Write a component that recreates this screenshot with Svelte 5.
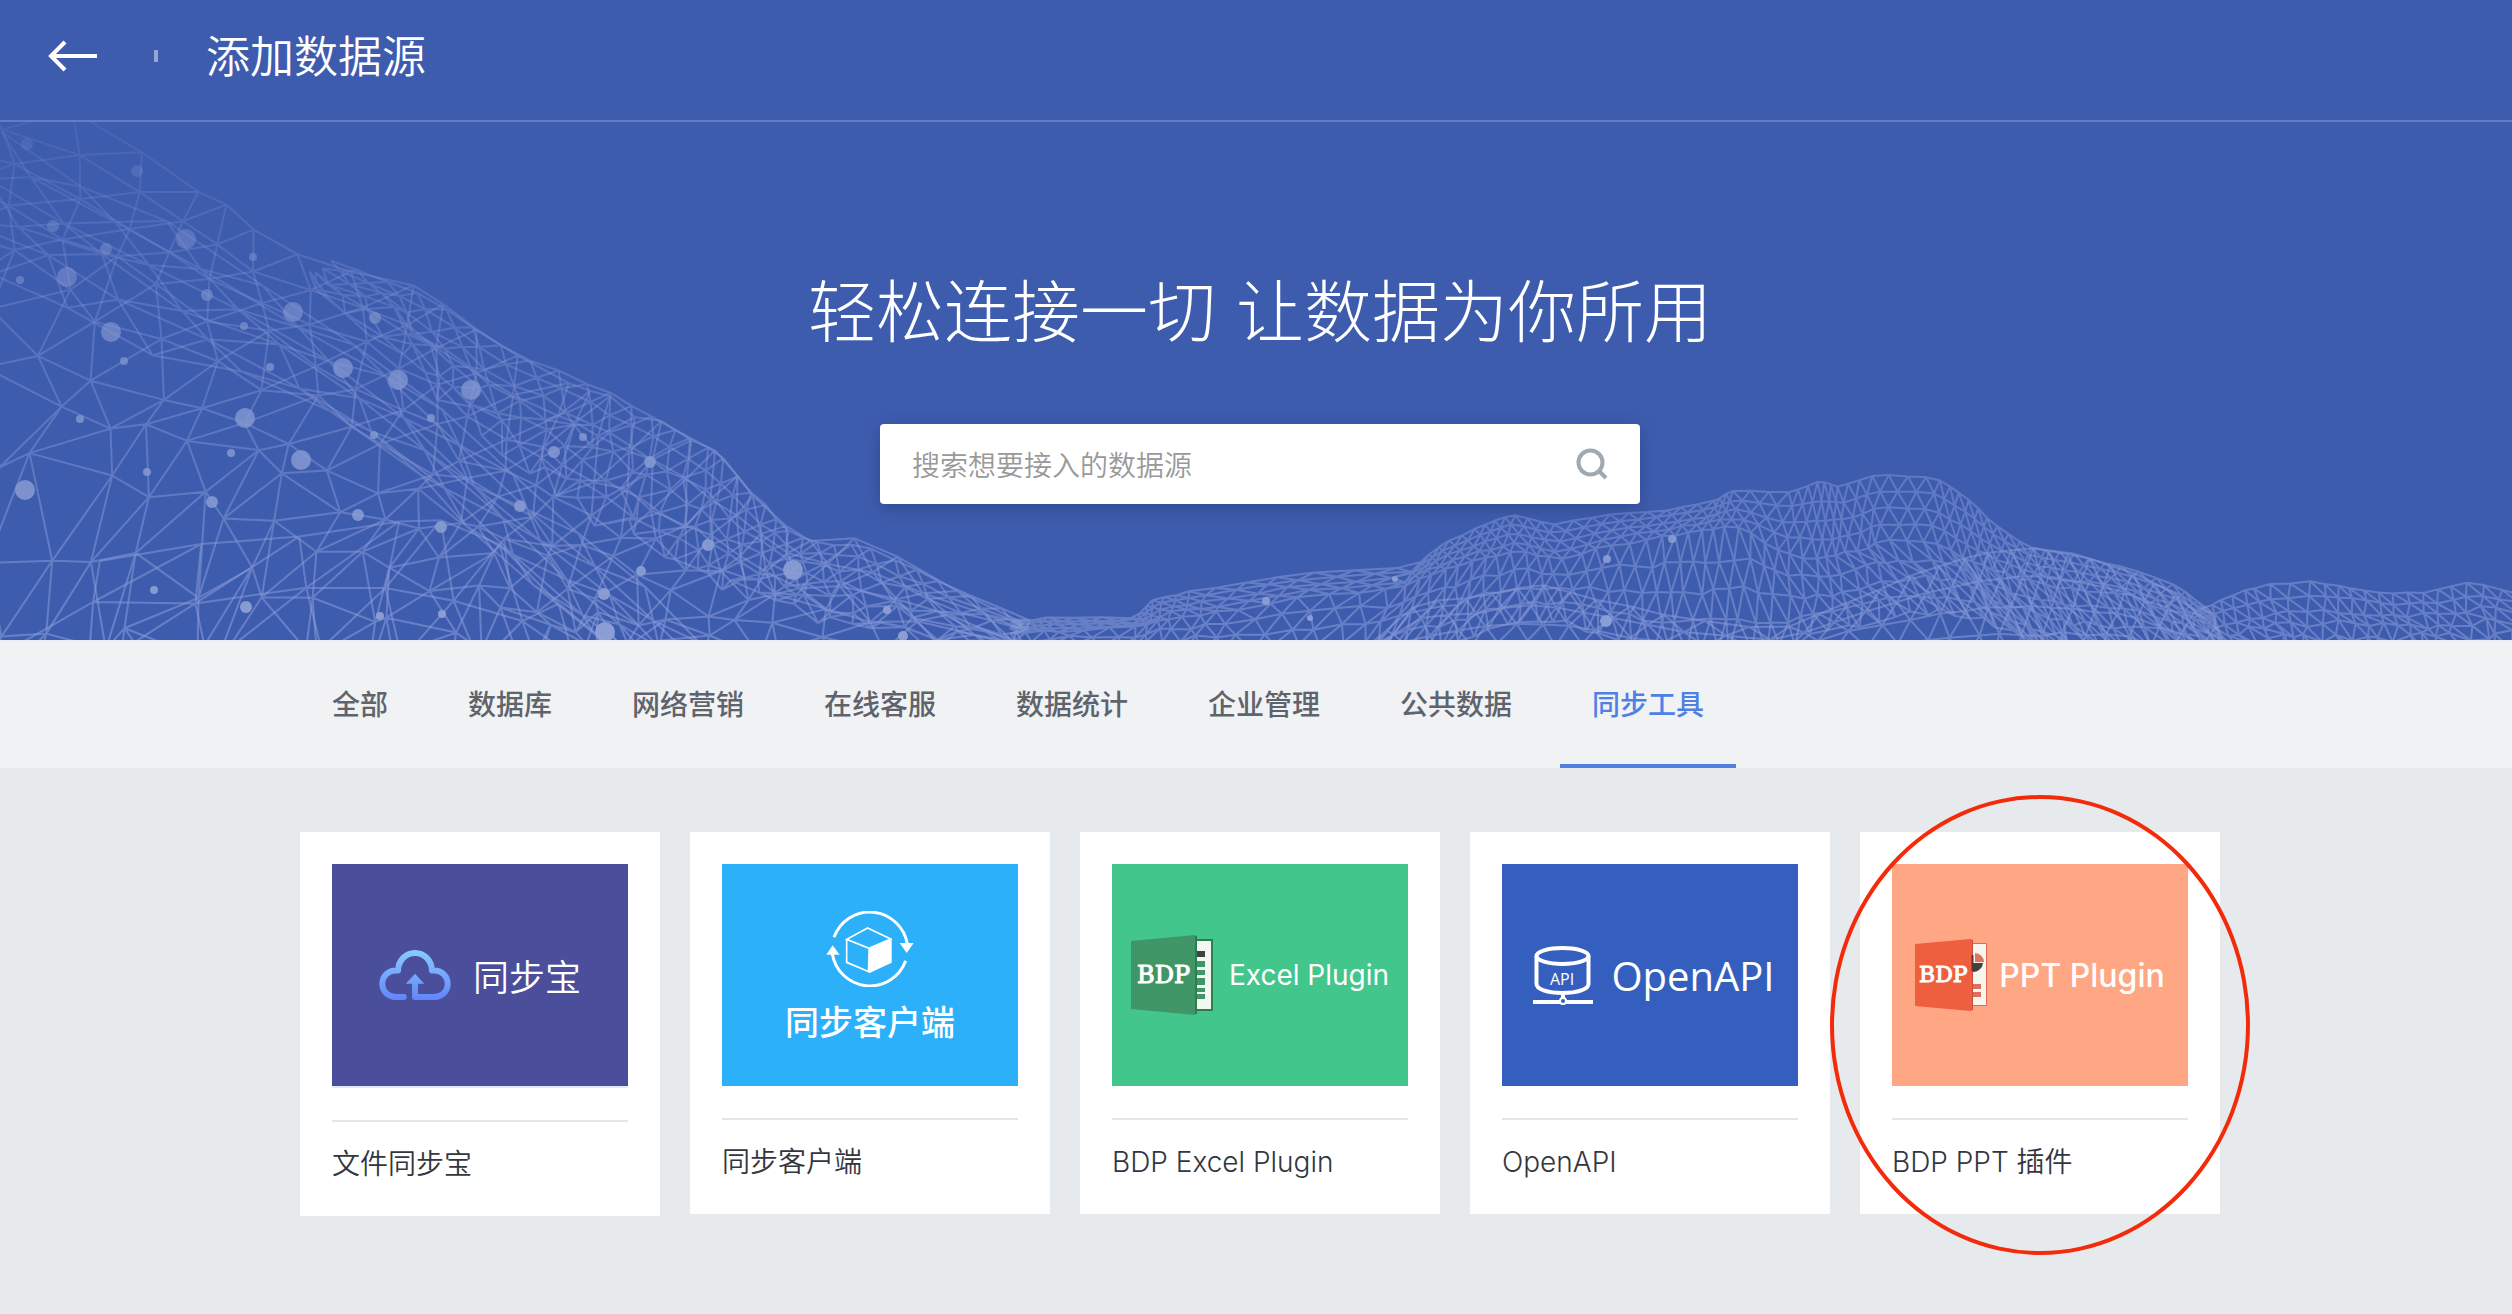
<script>
    let keyword = "";
    let activeTab = "同步工具";

    const tabs = ["全部", "数据库", "网络营销", "在线客服", "数据统计", "企业管理", "公共数据", "同步工具"];

    const sources = [
        { id: "file", name: "文件同步宝" },
        { id: "client", name: "同步客户端" },
        { id: "excel", name: "BDP Excel Plugin" },
        { id: "api", name: "OpenAPI" },
        { id: "ppt", name: "BDP PPT 插件", marked: true }
    ];

    // repeatable noise, so the mesh is the same on every load
    function noise(a, b) {
        const v = Math.sin(a * 127.1 + b * 311.7) * 43758.5453;
        return v - Math.floor(v) - 0.5;
    }

    // point at share s of a polyline, by index
    function along(line, s) {
        const f = Math.min(Math.max(s, 0), 1) * (line.length - 1);
        const i = Math.min(Math.floor(f), line.length - 2);
        const k = f - i;
        return [
            line[i][0] + (line[i + 1][0] - line[i][0]) * k,
            line[i][1] + (line[i + 1][1] - line[i][1]) * k
        ];
    }

    // triangulated sheet stretched over a list of ridge lines
    function sheet(ridges, cols, rows, jitter, seed) {
        const points = [];
        for (let r = 0; r <= rows; r++) {
            const f = (r / rows) * (ridges.length - 1);
            const k = Math.min(Math.floor(f), ridges.length - 2);
            const row = [];
            for (let c = 0; c <= cols; c++) {
                const s = (c + (r % 2) * 0.5) / cols;
                const a = along(ridges[k], s);
                const b = along(ridges[k + 1], s);
                const t = f - k;
                const scale = r === 0 ? 0.2 : r / rows;
                row.push([
                    a[0] + (b[0] - a[0]) * t + noise(c + seed, r) * jitter * scale,
                    a[1] + (b[1] - a[1]) * t + noise(r, c + seed) * jitter * scale
                ]);
            }
            points.push(row);
        }
        let d = "";
        const line = (p, q) => {
            d += `M${p[0].toFixed(1)} ${p[1].toFixed(1)}L${q[0].toFixed(1)} ${q[1].toFixed(1)}`;
        };
        for (let r = 0; r <= rows; r++) {
            for (let c = 0; c <= cols; c++) {
                if (c < cols) line(points[r][c], points[r][c + 1]);
                if (r < rows) {
                    line(points[r][c], points[r + 1][c]);
                    const side = r % 2 ? c + 1 : c - 1;
                    if (side >= 0 && side <= cols) line(points[r][c], points[r + 1][side]);
                }
            }
        }
        return d;
    }

    const slope = sheet([
        [[-20, -30], [100, 2], [190, 60], [231, 88], [271, 125], [348, 152], [422, 170], [462, 198], [512, 230], [579, 267], [603, 267], [633, 292], [670, 304], [713, 329], [743, 357], [767, 387], [807, 421], [864, 421], [934, 456], [1024, 498]],
        [[-80, 60], [0, 90], [70, 130], [130, 160], [200, 200], [280, 230], [340, 260], [390, 300], [440, 330], [490, 355], [530, 380], [570, 400], [610, 420], [650, 440], [700, 460], [740, 480], [790, 490], [850, 500], [920, 510], [1010, 530]],
        [[-200, 220], [-110, 250], [-40, 280], [30, 310], [100, 335], [170, 355], [230, 370], [290, 385], [350, 400], [400, 420], [450, 450], [500, 475], [540, 500], [580, 520], [630, 540], [680, 550], [730, 560], [800, 570], [880, 575], [980, 580]],
        [[-300, 560], [-200, 570], [-120, 580], [-40, 590], [30, 600], [100, 600], [160, 600], [220, 600], [280, 600], [340, 600], [400, 600], [460, 610], [520, 610], [580, 610], [640, 610], [700, 610], [760, 610], [820, 610], [880, 610], [960, 610]]
    ], 26, 10, 60, 3);

    // stretched folds that run down the middle of the slope
    const folds = sheet([
        [[0, 10], [90, 70], [190, 110], [300, 190], [400, 250], [490, 330], [560, 400], [640, 460], [700, 520]],
        [[-20, 70], [70, 110], [160, 160], [270, 215], [360, 265], [440, 340], [520, 410], [590, 470], [650, 530]],
        [[-40, 130], [50, 170], [130, 215], [240, 250], [330, 290], [420, 350], [490, 420], [560, 485], [620, 540]]
    ], 9, 5, 24, 19);

    const slopeRidge = sheet([
        [[330, 140], [422, 172], [512, 230], [603, 268], [670, 304], [725, 338], [767, 388], [807, 422], [864, 421], [934, 456], [1030, 500]],
        [[300, 160], [400, 230], [470, 300], [540, 350], [600, 395], [660, 430], [710, 455], [760, 480], [830, 500], [900, 515], [1010, 530]]
    ], 32, 6, 22, 11);

    const foothill = sheet([
        [[100, 438], [200, 424], [300, 414], [400, 398], [440, 400], [500, 424], [560, 480], [610, 520]],
        [[0, 530], [90, 545], [200, 540], [320, 530], [400, 540], [480, 550], [540, 560], [600, 580]]
    ], 7, 2, 20, 29);

    const hills = sheet([
        [[1010, 500], [1048, 496], [1135, 496], [1154, 477], [1193, 469], [1289, 453], [1415, 444], [1444, 421], [1482, 404], [1511, 392], [1550, 403], [1607, 393], [1665, 388], [1714, 379], [1733, 369], [1791, 370], [1820, 359], [1839, 365], [1877, 352], [1935, 355], [1964, 373], [1993, 401], [2027, 425], [2070, 431], [2119, 444], [2172, 461], [2210, 488]],
        [[1010, 512], [1060, 508], [1140, 506], [1170, 496], [1220, 490], [1310, 474], [1400, 466], [1440, 450], [1480, 438], [1520, 430], [1560, 438], [1610, 424], [1660, 414], [1700, 410], [1740, 404], [1780, 430], [1820, 438], [1850, 430], [1880, 420], [1930, 418], [1970, 440], [2000, 450], [2040, 462], [2080, 468], [2130, 474], [2180, 492], [2220, 508]],
        [[990, 540], [1050, 540], [1110, 540], [1160, 540], [1220, 540], [1290, 540], [1350, 540], [1400, 530], [1450, 520], [1500, 500], [1550, 495], [1600, 510], [1650, 530], [1700, 530], [1750, 530], [1800, 520], [1850, 505], [1900, 490], [1950, 490], [1990, 500], [2030, 520], [2060, 530], [2100, 540], [2140, 540], [2190, 540], [2220, 540], [2240, 540]]
    ], 80, 8, 8, 47);

    const frontHill = sheet([
        [[1360, 530], [1420, 480], [1480, 474], [1540, 462], [1600, 478], [1680, 496], [1780, 508], [1850, 480], [1920, 450], [1980, 432], [2030, 425], [2070, 432], [2120, 446], [2170, 468], [2215, 505]],
        [[1340, 570], [1400, 550], [1470, 540], [1540, 540], [1600, 540], [1680, 550], [1780, 550], [1850, 540], [1920, 540], [1980, 540], [2030, 540], [2080, 540], [2130, 540], [2180, 550], [2240, 560]]
    ], 32, 4, 8, 61);

    const farHill = sheet([
        [[2200, 486], [2230, 474], [2260, 464], [2316, 460], [2350, 465], [2390, 472], [2430, 470], [2470, 459], [2520, 471]],
        [[2240, 530], [2270, 530], [2310, 530], [2350, 530], [2390, 530], [2430, 525], [2470, 525], [2510, 525], [2550, 530]]
    ], 22, 5, 14, 83);

    const dots = [
        [186, 117, 10], [67, 155, 10], [111, 210, 10], [293, 190, 10], [343, 246, 10], [398, 258, 10], [471, 268, 10],
        [245, 296, 10], [301, 338, 10], [25, 368, 10], [793, 448, 10], [605, 510, 10],
        [554, 330, 6], [650, 340, 6], [708, 423, 6], [520, 384, 6], [441, 405, 6], [358, 393, 6], [246, 485, 6],
        [212, 380, 6], [604, 472, 6], [106, 127, 6], [375, 196, 6], [207, 173, 6], [53, 104, 6], [27, 22, 6], [137, 49, 6],
        [80, 297, 4], [231, 331, 4], [147, 350, 4], [374, 313, 4], [431, 296, 4], [270, 245, 4], [124, 239, 4],
        [154, 468, 4], [380, 494, 4], [442, 492, 4], [583, 315, 4], [641, 449, 5], [20, 158, 4], [244, 204, 4],
        [253, 135, 4], [887, 488, 4], [903, 514, 5],
        [1266, 479, 4], [1606, 499, 6], [1607, 437, 4], [1672, 417, 4], [1310, 496, 3], [1395, 457, 3]
    ];
</script>

<div class="page">
    <header class="topbar">
        <button class="back" aria-label="返回">
            <svg width="50" height="32" viewBox="0 0 50 32" fill="none" stroke="#fff" stroke-width="4">
                <path d="M49 16H4M17 2L3 16L17 30" />
            </svg>
        </button>
        <span class="separator"></span>
        <h2>添加数据源</h2>
    </header>

    <section class="hero">
        <svg class="mesh" viewBox="0 0 2512 518" preserveAspectRatio="xMinYMax slice" aria-hidden="true">
            <defs>
                <linearGradient id="fade" gradientUnits="userSpaceOnUse" x1="0" y1="0" x2="0" y2="518">
                    <stop offset="0" stop-color="#8c9edb" stop-opacity="0.12" />
                    <stop offset="0.4" stop-color="#8c9edb" stop-opacity="0.32" />
                    <stop offset="1" stop-color="#8c9edb" stop-opacity="0.54" />
                </linearGradient>
                <linearGradient id="dot-fade" gradientUnits="userSpaceOnUse" x1="0" y1="0" x2="0" y2="518">
                    <stop offset="0" stop-color="#8598d2" stop-opacity="0.15" />
                    <stop offset="0.5" stop-color="#8598d2" stop-opacity="0.75" />
                    <stop offset="1" stop-color="#8fa1d6" stop-opacity="0.95" />
                </linearGradient>
            </defs>
            <g fill="none" stroke="url(#fade)" stroke-width="2">
                <path d={slope} />
                <path d={folds} />
                <path d={slopeRidge} />
                <path d={foothill} />
                <path d={hills} />
                <path d={frontHill} />
                <path d={farHill} />
            </g>
            <g fill="url(#dot-fade)">
                {#each dots as [x, y, r]}
                    <circle cx={x} cy={y} {r} />
                {/each}
            </g>
        </svg>

        <h1><span>轻松连接一切</span><span>让数据为你所用</span></h1>
        <form class="search" on:submit|preventDefault>
            <input type="text" placeholder="搜索想要接入的数据源" aria-label="搜索想要接入的数据源" bind:value={keyword}>
            <button aria-label="搜索">
                <svg width="32" height="32" viewBox="0 0 32 32" fill="none" stroke="#a1a9b0" stroke-width="4">
                    <circle cx="14.5" cy="14.5" r="12" />
                    <path d="M23 23L30 30" />
                </svg>
            </button>
        </form>
    </section>

    <nav class="tabs">
        <div class="container">
            {#each tabs as tab}
                <button class:active={tab === activeTab} on:click={() => activeTab = tab}>{tab}</button>
            {/each}
        </div>
    </nav>

    <main class="container cards">
        {#each sources as source}
            <a class="card" href="#{source.id}">
                <div class="thumb {source.id}">
                    {#if source.id === "file"}
                        <svg width="72" height="50" viewBox="261 395 216 151" fill="none">
                            <defs>
                                <linearGradient id="cloud" gradientUnits="userSpaceOnUse" x1="0" y1="395" x2="0" y2="546">
                                    <stop offset="0" stop-color="#8bcbfd" />
                                    <stop offset="1" stop-color="#6085fb" />
                                </linearGradient>
                            </defs>
                            <path d="M335 537H310A40 40 0 0 1 310 457H318C318 428 340 404 369 404S420 428 420 457H428A40 40 0 0 1 428 537H369V492" stroke="url(#cloud)" stroke-width="18" stroke-linejoin="round" />
                            <circle cx="335" cy="537" r="9" fill="url(#cloud)" />
                            <path d="M369 467L397 497H341Z" fill="url(#cloud)" />
                        </svg>
                        <span>同步宝</span>
                    {:else if source.id === "client"}
                        <svg width="88" height="76" viewBox="439 264 264 228" fill="none" stroke="#fff">
                            <path d="M463 343A114 114 0 0 1 683 364M458 392A114 114 0 0 0 678 413" stroke-width="9" />
                            <path d="M660 360H702L681 390ZM440 395H480L459 367Z" fill="#fff" stroke="none" />
                            <path d="M564 315L633 348L568 376L501 349ZM501 349V418L568 446" stroke-width="5" />
                            <path d="M566 375L636 347V419L570 450L564 447Z" fill="#fff" stroke="none" />
                        </svg>
                        <span>同步客户端</span>
                    {:else if source.id === "excel"}
                        <svg width="82" height="80" viewBox="0 0 82 80">
                            <path d="M60 5H81V75H60Z" fill="#f3f7f2" stroke="#2c7d50" stroke-width="2" />
                            <path d="M65 16H74V22H65Z" fill="#41423f" />
                            <path d="M65 26H74V32H65ZM65 35H74V40H65ZM65 43H74V50H65ZM65 53H74V57H65ZM65 59H74V64H65Z" fill="#419667" />
                            <path d="M0 6L64 0L66 2V78L64 80L0 74Z" fill="#419667" />
                            <path d="M65 1V79" stroke="#2c7d50" stroke-width="2" />
                            <text x="6" y="48" font-size="24">BDP</text>
                        </svg>
                        <span>Excel Plugin</span>
                    {:else if source.id === "api"}
                        <svg width="60" height="59" viewBox="0 0 60 59" fill="none" stroke="#fff" stroke-width="4">
                            <ellipse cx="29.5" cy="10" rx="26" ry="8" />
                            <path d="M3.500 10V38C3.500 43 14 47 29.500 47S55.500 43 55.500 38V10M30 47V52M0 56H27M33 56H60" />
                            <circle cx="30" cy="55" r="3" stroke-width="2" />
                            <text class="api-text" x="29" y="39" font-size="16" text-anchor="middle">API</text>
                        </svg>
                        <span>OpenAPI</span>
                    {:else}
                        <svg width="72" height="72" viewBox="0 0 72 72">
                            <path d="M56 4.500H71.500V66.500H56Z" fill="#f8f5ef" stroke="#e0684f" />
                            <path d="M57 24H68A10 10 0 0 1 57 33Z" fill="#41423f" />
                            <path d="M60 14A9 9 0 0 1 69 23H60Z" fill="#dc7562" />
                            <path d="M57 45H66V50H57ZM57 53H66V58H57Z" fill="#dc6f5a" />
                            <path d="M0 5L56 0L58 1V71L56 72L0 67Z" fill="#ee5f40" />
                            <path d="M57.500 1V71" stroke="#c54d3a" />
                            <path d="M57.500 16V32" stroke="#6a3030" stroke-width="2" />
                            <text x="4" y="43" font-size="22">BDP</text>
                        </svg>
                        <span>PPT Plugin</span>
                    {/if}
                </div>
                <div class="name">{source.name}</div>
                {#if source.marked}
                    <span class="marker"></span>
                {/if}
            </a>
        {/each}
    </main>
</div>

<style>
    :global(body) {
        margin: 0;
        background: #e6eaed;
    }

    .page {
        min-height: 100vh;
        font-family: Inter, "Noto Sans CJK SC", sans-serif;
        color: #33363f;
    }

    button, input {
        font: inherit;
        border: none;
        outline: none;
        padding: 0;
        background: none;
    }

    button {
        cursor: pointer;
    }

    svg {
        display: block;
        flex: none;
    }

    h1, h2 {
        margin: 0;
        color: #fff;
        font-family: "Noto Sans CJK SC", sans-serif;
    }

    .topbar {
        display: flex;
        align-items: center;
        height: 120px;
        padding: 0 48px;
        background: #3e5cae;
        border-bottom: 2px solid #647ac4;
    }

    .topbar > * {
        margin-bottom: 8px;
    }

    .separator {
        width: 4px;
        height: 12px;
        margin-left: 56px;
        margin-right: 48px;
        background: #94a4d3;
    }

    h2 {
        font-size: 44px;
        line-height: 56px;
        padding-bottom: 4px;
        font-weight: 350;
    }

    .hero {
        position: relative;
        display: flex;
        flex-direction: column;
        align-items: center;
        height: 518px;
        padding-left: 8px;
        box-sizing: border-box;
        overflow: hidden;
        background: #3e5cae;
    }

    .mesh {
        position: absolute;
        left: 0;
        top: 0;
        width: 100%;
        height: 100%;
    }

    h1 {
        position: relative;
        display: flex;
        gap: 20px;
        margin-top: 136px;
        font-size: 68px;
        line-height: 100px;
        font-weight: 300;
    }

    .search {
        position: relative;
        display: flex;
        align-items: center;
        width: 760px;
        height: 80px;
        margin-top: 66px;
        padding: 0 32px;
        box-sizing: border-box;
        border-radius: 4px;
        background: #fff;
        box-shadow: 0 4px 16px rgba(30, 45, 100, 0.4);
    }

    .search input {
        flex: 1;
        height: 80px;
        font-family: "Noto Sans CJK SC", sans-serif;
        font-size: 28px;
        font-weight: 350;
        color: #33363f;
    }

    .search input::placeholder {
        color: #999;
        opacity: 1;
    }

    .container {
        max-width: 1920px;
        margin: 0 auto;
    }

    .tabs {
        height: 128px;
        padding-left: 8px;
        box-sizing: border-box;
        background: #f0f2f4;
        border-top: 2px solid #e8f0fb;
    }

    .tabs .container {
        display: flex;
        gap: 16px;
    }

    .tabs button {
        height: 126px;
        padding: 0 32px;
        box-sizing: border-box;
        border-bottom: 4px solid transparent;
        font-family: "Noto Sans CJK SC", sans-serif;
        font-size: 28px;
        font-weight: 500;
        color: #5e636c;
        white-space: nowrap;
    }

    .tabs button.active {
        color: #4f80e4;
        border-bottom-color: #4f80de;
    }

    .cards {
        display: grid;
        grid-template-columns: repeat(5, 1fr);
        align-items: start;
        gap: 30px;
        padding: 64px 0 64px 8px;
    }

    .card {
        position: relative;
        display: block;
        padding: 32px;
        background: #fff;
        color: inherit;
        text-decoration: none;
    }

    .thumb {
        display: flex;
        align-items: center;
        justify-content: center;
        height: 222px;
        gap: 16px;
        color: #fff;
        white-space: nowrap;
    }

    .thumb text {
        font-family: "DejaVu Serif", serif;
        fill: #fff;
        stroke: #fff;
        stroke-width: 1;
    }

    .thumb .api-text {
        font-family: "Open Sans", sans-serif;
        stroke: none;
    }

    .file {
        gap: 22px;
        background: #4a4e9b;
        border-bottom: 2px solid #e2ebfb;
        font-family: "Noto Sans CJK SC", sans-serif;
        font-size: 36px;
        line-height: 52px;
        font-weight: 350;
    }

    .client {
        flex-direction: column;
        gap: 16px;
        background: #2bb0f9;
        font-family: "Noto Sans CJK SC", sans-serif;
        font-size: 34px;
        line-height: 36px;
        font-weight: 500;
    }

    .excel {
        background: #42c68c;
        font-size: 28px;
    }

    .api {
        gap: 18px;
        padding-left: 8px;
        background: #355fbf;
        font-family: "Open Sans", sans-serif;
        font-size: 40px;
    }

    .ppt {
        gap: 12px;
        background: #ffa684;
        font-size: 32px;
        font-weight: 500;
    }

    .name {
        margin-top: 32px;
        padding-top: 22px;
        border-top: 2px solid #e4e5e7;
        font-size: 28px;
        line-height: 40px;
        font-weight: 350;
    }

    /* ring around the highlighted source */
    .marker {
        position: absolute;
        top: -37px;
        right: -30px;
        bottom: -41px;
        left: -30px;
        border: 4px solid #f42b0b;
        border-radius: 50%;
        pointer-events: none;
    }
</style>
